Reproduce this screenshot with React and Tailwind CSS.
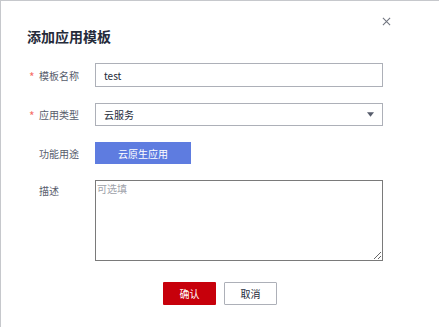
import React from "react";

const font = { fontFamily: '"Noto Sans CJK SC", "Noto Sans", sans-serif' };

function Label({ required, children }) {
  return (
    <div className="w-[94px] shrink-0 flex items-center pl-[28px] text-[10px] text-[#575d6c]">
      <span className={"w-[10px] text-[12px] leading-none pt-[3px] " + (required ? "text-[#f66f6a]" : "text-transparent")}>*</span>
      <span>{children}</span>
    </div>
  );
}

export default function App() {
  return (
    <div
      className="relative w-[439px] h-[327px] bg-white border-l border-t border-[#c6c8cc] overflow-hidden"
      style={font}
    >
      {/* close */}
      <button className="absolute left-[381px] top-[16px] w-[9px] h-[9px] text-[#71757f]">
        <svg viewBox="0 0 10 10" width="9" height="9" fill="none" stroke="currentColor" strokeWidth="1.2">
          <path d="M1 1 L9 9 M9 1 L1 9" />
        </svg>
      </button>

      <h2 className="pt-[24px] pl-[26px] text-[14px] leading-[22px] font-bold text-[#252b3a]">
        添加应用模板
      </h2>

      <div className="flex flex-col mt-[16px]">
        <div className="flex items-center h-[24px]">
          <Label required>模板名称</Label>
          <div className="w-[288px] h-[24px] border border-[#adb0b8] flex items-center px-[8px] text-[10px] text-[#252b3a]">
            test
          </div>
        </div>

        <div className="flex items-center h-[23px] mt-[16px]">
          <Label required>应用类型</Label>
          <div className="w-[288px] h-[23px] border border-[#adb0b8] flex items-center justify-between pl-[8px] pr-[8px] text-[10px] text-[#252b3a]">
            <span>云服务</span>
            <svg width="7" height="5" viewBox="0 0 8 5">
              <path d="M0 0 H8 L4 5 Z" fill="#575d6c" />
            </svg>
          </div>
        </div>

        <div className="flex items-center h-[22px] mt-[16px]">
          <Label>功能用途</Label>
          <button className="w-[96px] h-[22px] bg-[#5e7ce0] text-white text-[10px]">
            云原生应用
          </button>
        </div>

        <div className="flex items-start mt-[16px]">
          <div className="pt-[3px]">
            <Label>描述</Label>
          </div>
          <textarea
            placeholder="可选填"
            className="w-[288px] h-[81px] border border-[#7a7a7a] px-[1px] py-[1px] text-[10px] leading-[14px] text-[#252b3a] placeholder:text-[#a0a3aa] outline-none"
            style={font}
          />
        </div>
      </div>

      <div className="flex justify-center gap-[8px] mt-[21px]">
        <button className="w-[53px] h-[23px] bg-[#c7000b] text-white text-[10px] rounded-[1px]">
          确认
        </button>
        <button className="w-[53px] h-[23px] border border-[#adb0b8] bg-white text-[#252b3a] text-[10px] rounded-[1px]">
          取消
        </button>
      </div>
    </div>
  );
}
